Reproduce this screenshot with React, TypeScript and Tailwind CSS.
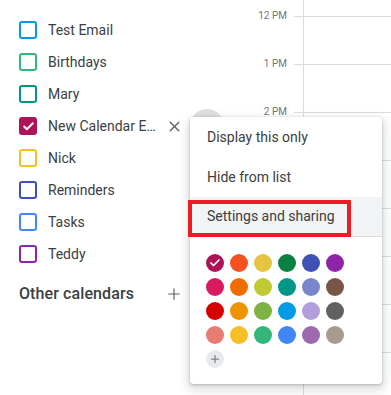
import { X, Plus, Check } from "lucide-react";

const calendars = [
  { name: "Test Email", color: "#039be5" },
  { name: "Birthdays", color: "#33b679" },
  { name: "Mary", color: "#009688" },
  { name: "New Calendar Entry", color: "#ad1457", checked: true, active: true },
  { name: "Nick", color: "#f6bf26" },
  { name: "Reminders", color: "#3f51b5" },
  { name: "Tasks", color: "#4285f4" },
  { name: "Teddy", color: "#8e24aa" },
];

const palette = [
  "#ad1457", "#f4511e", "#e4c441", "#0b8043", "#3f51b5", "#8e24aa",
  "#d81b60", "#ef6c00", "#c0ca33", "#009688", "#7986cb", "#795548",
  "#d50000", "#f09300", "#7cb342", "#039be5", "#b39ddb", "#616161",
  "#e67c73", "#f6bf26", "#33b679", "#4285f4", "#9e69af", "#a79b8e",
];

// labels behind the menu are not visible, so only the first three carry text
const hours = ["12 PM", "1 PM", "2 PM", "", "", "", "", ""];

const App = () => {
  return (
    <div className="relative w-[391px] h-[395px] overflow-hidden bg-white flex font-['Roboto',sans-serif]">
      {/* Sidebar */}
      <div className="w-[240px] shrink-0 pt-[14px]">
        {calendars.map((cal) => (
          <div key={cal.name} className="h-8 flex items-center pl-[19px]">
            <div
              className="w-[18px] h-[18px] rounded-[3px] border-2 flex items-center justify-center shrink-0"
              style={{ borderColor: cal.color, backgroundColor: cal.checked ? cal.color : "transparent" }}
            >
              {cal.checked && <Check className="w-[13px] h-[13px] text-white" strokeWidth={3.5} />}
            </div>
            {cal.active ? (
              <>
                <span className="ml-[11px] w-[108px] truncate text-[14px] text-[#3c4043]">{cal.name}</span>
                <X className="ml-[10px] w-[17px] h-[17px] text-[#5f6368] shrink-0" strokeWidth={2} />
                <div className="ml-[7px] w-[34px] h-[34px] rounded-full bg-[#dedfe1] shrink-0" />
              </>
            ) : (
              <span className="ml-[11px] text-[14px] text-[#3c4043]">{cal.name}</span>
            )}
          </div>
        ))}
        <div className="mt-[8px] h-8 flex items-center pl-[19px] pr-[57px] justify-between">
          <span className="text-[16px] font-medium text-[#3c4043] tracking-[0.1px]">Other calendars</span>
          <Plus className="w-[18px] h-[18px] text-[#5f6368]" strokeWidth={1.6} />
        </div>
      </div>

      {/* Time gutter */}
      <div className="w-[63px] shrink-0 pt-[9px]">
        {hours.map((h, i) => (
          <div key={i} className="h-12 flex items-start">
            <span className="flex-1 text-right pr-[7px] text-[10px] leading-[14px] text-[#70757a]">{h}</span>
            <div className="w-[9px] mt-[7px] border-t border-[#dadce0]" />
          </div>
        ))}
      </div>

      {/* Grid */}
      <div className="flex-1 border-l border-[#dadce0] pt-[16px]">
        {hours.map((_, i) => (
          <div key={i} className="h-12 border-t border-[#dadce0]" />
        ))}
      </div>

      {/* Context menu */}
      <div className="absolute left-[190px] top-[117px] w-[192px] bg-white rounded-[4px] shadow-[0_4px_8px_3px_rgba(60,64,67,0.15),0_1px_3px_rgba(60,64,67,0.3)]">
        <div className="h-10 flex items-center pl-[17px] text-[14px] text-[#3c4043]">Display this only</div>
        <div className="h-10 flex items-center pl-[17px] text-[14px] text-[#3c4043]">Hide from list</div>
        <div className="h-10 flex items-center pl-[17px] text-[14px] text-[#3c4043] bg-[#f1f3f4] border-b border-[#dadce0]">
          Settings and sharing
        </div>
        <div className="pt-[17px] pb-[16px] pl-[16px]">
          <div className="grid grid-cols-[repeat(6,18px)] gap-[6px]">
            {palette.map((c, i) => (
              <div key={c + i} className="w-[18px] h-[18px] rounded-full flex items-center justify-center" style={{ backgroundColor: c }}>
                {i === 0 && <Check className="w-[12px] h-[12px] text-white" strokeWidth={3.5} />}
              </div>
            ))}
            <div className="w-[18px] h-[18px] rounded-full bg-[#e8eaed] flex items-center justify-center">
              <Plus className="w-[12px] h-[12px] text-[#80868b]" strokeWidth={2.5} />
            </div>
          </div>
        </div>
      </div>

      {/* Highlight box */}
      <div className="absolute left-[188px] top-[200px] w-[163px] h-[37px] border-[4px] border-[#ed1c24]" />
    </div>
  );
};

export default App;
